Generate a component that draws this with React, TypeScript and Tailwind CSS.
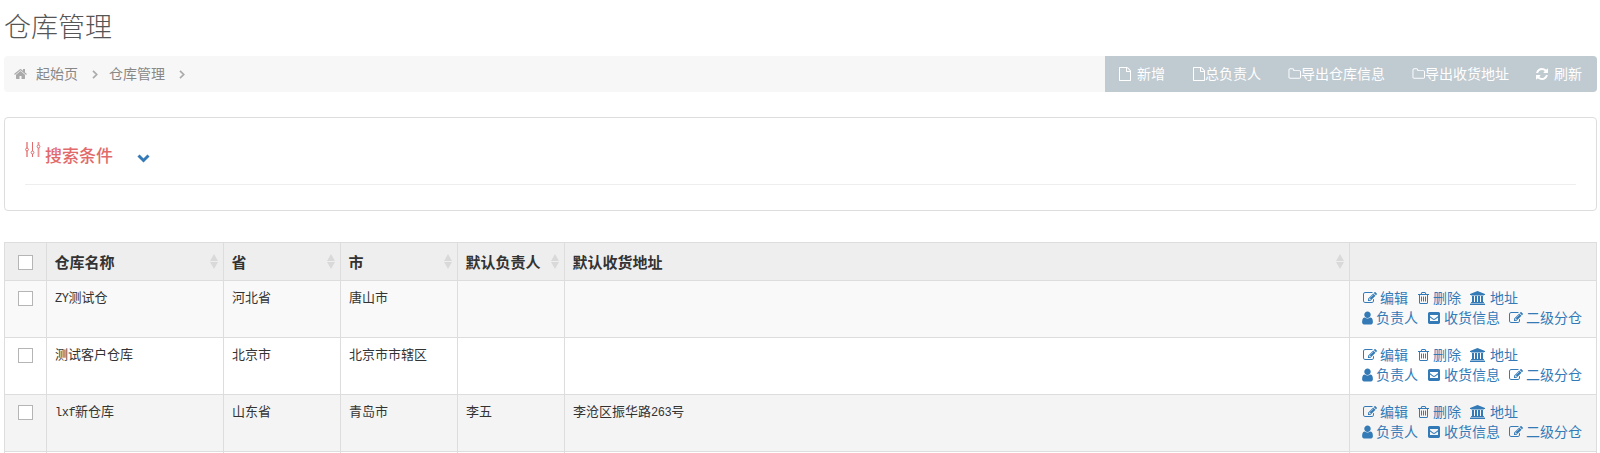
import React from "react";

type IconProps = { box: string; w: string; d: string; className?: string };

const Icon = ({ box, w, d, className = "" }: IconProps) => (
  <svg viewBox={box} className={`${w} h-3.5 shrink-0 ${className}`} fill="currentColor" aria-hidden="true">
    <path d={d} fillRule="evenodd" />
  </svg>
);

const FILE =
  "M1596 380q28 28 48 76t20 88v1152q0 40-28 68t-68 28h-1344q-40 0-68-28t-28-68v-1600q0-40 28-68t68-28h896q40 0 88 20t76 48zm-444-244v376h376q-10-29-22-41l-313-313q-12-12-41-22zm384 1528v-1024h-416q-40 0-68-28t-28-68v-416h-768v1536h1280z";
const FOLDER =
  "M1600 1312v-704q0-40-28-68t-68-28h-704q-40 0-68-28t-28-68v-64q0-40-28-68t-68-28h-320q-40 0-68 28t-28 68v960q0 40 28 68t68 28h1216q40 0 68-28t28-68zm128-704v704q0 92-66 158t-158 66h-1216q-92 0-158-66t-66-158v-960q0-92 66-158t158-66h320q92 0 158 66t66 158v32h672q92 0 158 66t66 158z";
const REFRESH =
  "M1639 1056q0 5-1 7-64 268-268 434.5t-478 166.5q-146 0-282.5-55t-243.5-157l-129 129q-19 19-45 19t-45-19-19-45v-448q0-26 19-45t45-19h448q26 0 45 19t19 45-19 45l-137 137q71 66 161 102t187 36q134 0 250-65t186-179q11-17 53-117 8-23 30-23h192q13 0 22.5 9.5t9.5 22.5zm25-800v448q0 26-19 45t-45 19h-448q-26 0-45-19t-19-45 19-45l138-138q-148-137-349-137-134 0-250 65t-186 179q-11 17-53 117-8 23-30 23h-199q-13 0-22.5-9.5t-9.5-22.5v-7q65-268 270-434.5t480-166.5q146 0 284 55.5t245 156.5l130-129q19-19 45-19t45 19 19 45z";
const HOME =
  "M1472 992v480q0 26-19 45t-45 19h-384v-384h-256v384h-384q-26 0-45-19t-19-45v-480q0-1 .5-3t.5-3l575-474 575 474q1 2 1 6zm223-69l-62 74q-8 9-21 11h-3q-13 0-21-7l-692-577-692 577q-12 8-24 7-13-2-21-11l-62-74q-8-10-7-23.5t11-21.5l719-599q32-26 76-26t76 26l244 204v-195q0-14 9-23t23-9h192q14 0 23 9t9 23v408l219 182q10 8 11 21.5t-7 23.5z";
const EDIT =
  "M888 1184l116-116-152-152-116 116v56h96v96h56zm440-720q-16-16-33 1l-350 350q-17 17-1 33t33-1l350-350q17-17 1-33zm80 594v190q0 119-84.5 203.5t-203.5 84.5h-832q-119 0-203.5-84.5t-84.5-203.5v-832q0-119 84.5-203.5t203.5-84.5h832q63 0 117 25 15 7 18 23 3 17-9 29l-49 49q-14 14-32 8-23-6-45-6h-832q-66 0-113 47t-47 113v832q0 66 47 113t113 47h832q66 0 113-47t47-113v-126q0-13 9-22l64-64q15-15 35-7t20 29zm-96-738l288 288-672 672h-288v-288zm444 132l-92 92-288-288 92-92q28-28 68-28t68 28l152 152q28 28 28 68t-28 68z";
const TRASH =
  "M704 736v576q0 14-9 23t-23 9h-64q-14 0-23-9t-9-23v-576q0-14 9-23t23-9h64q14 0 23 9t9 23zm256 0v576q0 14-9 23t-23 9h-64q-14 0-23-9t-9-23v-576q0-14 9-23t23-9h64q14 0 23 9t9 23zm256 0v576q0 14-9 23t-23 9h-64q-14 0-23-9t-9-23v-576q0-14 9-23t23-9h64q14 0 23 9t9 23zm128 724v-948h-896v948q0 22 7 40.5t14.5 27 10.5 8.5h832q3 0 10.5-8.5t14.5-27 7-40.5zm-672-1076h448l-48-117q-7-9-17-11h-317q-10 2-17 11zm928 32v64q0 14-9 23t-23 9h-96v948q0 83-47 143.5t-113 60.5h-832q-66 0-113-58.5t-47-141.5v-952h-96q-14 0-23-9t-9-23v-64q0-14 9-23t23-9h309l70-167q15-37 54-63t79-26h320q40 0 79 26t54 63l70 167h309q14 0 23 9t9 23z";
const BANK =
  "M960 0l960 384v128h-128q0 26-20.5 45t-48.5 19h-1526q-28 0-48.5-19t-20.5-45h-128v-128zm-704 640h256v768h128v-768h256v768h128v-768h256v768h128v-768h256v768h59q28 0 48.5 19t20.5 45v64h-1664v-64q0-26 20.5-45t48.5-19h59v-768zm1595 960q28 0 48.5 19t20.5 45v128h-1920v-128q0-26 20.5-45t48.5-19h1782z";
const USER =
  "M1536 1399q0 109-62.5 187t-150.5 78h-854q-88 0-150.5-78t-62.5-187q0-85 8.5-160.5t31.5-152 58.5-131 94-89 134.5-34.5q131 128 313 128t313-128q76 0 134.5 34.5t94 89 58.5 131 31.5 152 8.5 160.5zm-256-887q0 159-112.5 271.5t-271.5 112.5-271.5-112.5-112.5-271.5 112.5-271.5 271.5-112.5 271.5 112.5 112.5 271.5z";
const ENVELOPE =
  "M320 128h1152q80 0 136 56t56 136v1152q0 80-56 136t-136 56h-1152q-80 0-136-56t-56-136v-1152q0-80 56-136t136-56zM384 512v100q0 60 60 104l370 260q82 54 164 0l370-260q60-44 60-104v-100zM384 830v450h1024v-450l-352 262q-160 100-320 0z";

const Slim = ({ d }: { d: string }) => <Icon box="128 0 1536 1792" w="w-3" d={d} />;

const Angle = ({ className = "" }) => (
  <svg viewBox="0 0 6 9" className={`h-[9px] w-1.5 ${className}`} fill="none" stroke="#aaa" strokeWidth="1.7" aria-hidden="true">
    <path d="M1 .8l3.7 3.7L1 8.2" />
  </svg>
);

const Sort = () => (
  <svg viewBox="0 0 8 15" className="h-[15px] w-2 shrink-0" fill="#d9d9d9" aria-hidden="true">
    <path d="M4 0l4 7H0zM0 8h8l-4 7z" />
  </svg>
);

const Check = () => <span className="block size-[15px] border border-[#b5b5b5] bg-white" />;

const columns = ["仓库名称", "省", "市", "默认负责人", "默认收货地址"];

const rows = [
  { bg: "bg-[#f9f9f9]", cells: ["ZY测试仓", "河北省", "唐山市", "", ""] },
  { bg: "bg-white", cells: ["测试客户仓库", "北京市", "北京市市辖区", "", ""] },
  { bg: "bg-[#f4f4f4]", cells: ["lxf新仓库", "山东省", "青岛市", "李五", "李沧区振华路263号"] },
];

const grid = "grid grid-cols-[42px_177px_117px_117px_107px_785px_247px]";
const line = "border-r border-b border-[#ddd]";

const CellText = ({ text }: { text: string }) => (
  <>
    {text.split(/([A-Za-z0-9]+)/).map((part, i) =>
      /^[A-Za-z0-9]+$/.test(part) ? (
        <span key={i} className="font-['Liberation_Mono',monospace] text-[12px] tracking-[-0.5px]">{part}</span>
      ) : (
        part
      )
    )}
  </>
);

const Action = ({ icon, label, gap }: { icon: React.ReactNode; label: string; gap: string }) => (
  <a className={`flex items-center ${gap}`}>
    {icon}
    <span className="-mt-0.5">{label}</span>
  </a>
);

const Actions = () => (
  <div className="pt-[7px] pl-3 text-sm leading-5 font-normal text-[#337ab7]">
    <div className="flex h-5 items-center pl-px">
      <Action gap="gap-[3px]" icon={<Icon box="0 0 1792 1792" w="w-3.5" d={EDIT} />} label="编辑" />
      <span className="w-[10px]" />
      <Action gap="gap-1" icon={<Icon box="192 0 1408 1792" w="w-[11px]" d={TRASH} />} label="删除" />
      <span className="w-[9px]" />
      <Action gap="gap-[5px]" icon={<Icon box="0 0 1920 1792" w="w-[15px]" d={BANK} />} label="地址" />
    </div>
    <div className="flex h-5 items-center">
      <Action gap="gap-[3px]" icon={<Icon box="256 64 1280 1664" w="w-[11px]" d={USER} />} label="负责人" />
      <span className="w-[10px]" />
      <Action gap="gap-1" icon={<Slim d={ENVELOPE} />} label="收货信息" />
      <span className="w-[9px]" />
      <Action gap="gap-[3px]" icon={<Icon box="0 0 1792 1792" w="w-3.5" d={EDIT} />} label="二级分仓" />
    </div>
  </div>
);

export default function App() {
  return (
    <div className="h-[453px] w-[1600px] overflow-hidden bg-white pr-[3px] pl-1 font-['Noto_Sans_CJK_SC',sans-serif] text-[#333]">
      <h1 className="h-14 pt-[6px] text-[27px] leading-10 font-light text-[#555]">仓库管理</h1>

      <div className="flex h-9 justify-between overflow-hidden rounded bg-[#f7f7f7]">
        <nav className="flex items-center pl-[9px] text-sm font-normal text-[#888]">
          <Icon box="0 0 1664 1792" w="w-[14px]" d={HOME} className="text-[#aaa]" />
          <span className="-mt-0.5 ml-[9px]">起始页</span>
          <Angle className="ml-3.5" />
          <span className="-mt-0.5 ml-[11px]">仓库管理</span>
          <Angle className="ml-3.5" />
        </nav>
        <div className="flex w-[492px] items-center bg-[#bfcad1] pl-3.5 text-sm font-normal text-white">
          <Action gap="gap-1.5" icon={<Slim d={FILE} />} label="新增" />
          <span className="w-7" />
          <Action gap="gap-0" icon={<Slim d={FILE} />} label="总负责人" />
          <span className="w-[27px]" />
          <Action gap="gap-0" icon={<Icon box="0 0 1728 1792" w="w-[13px]" d={FOLDER} />} label="导出仓库信息" />
          <span className="w-[27px]" />
          <Action gap="gap-0" icon={<Icon box="0 0 1728 1792" w="w-[13px]" d={FOLDER} />} label="导出收货地址" />
          <span className="w-[27px]" />
          <Action gap="gap-1.5" icon={<Slim d={REFRESH} />} label="刷新" />
        </div>
      </div>

      <section className="mt-[25px] h-[94px] rounded border border-[#ddd] px-5">
        <div className="flex h-[67px] border-b border-[#eee] pt-6">
          <svg viewBox="0 0 16 16" className="size-4 text-[#e26a6a]" fill="none" stroke="currentColor" aria-hidden="true">
            <path d="M2 0v6M2 9v6M13.5 0v3M13.5 6v9" strokeWidth="1.8" opacity=".7" />
            <path d="M7.5 0v9M7.5 12v3" strokeWidth="1" />
            <circle cx="2" cy="7.5" r="1.4" />
            <circle cx="7.5" cy="10.5" r="1.4" />
            <circle cx="13.5" cy="4.5" r="1.4" />
          </svg>
          <span className="ml-1 h-6 pt-px text-[17px] leading-6 font-medium text-[#e26a6a]">搜索条件</span>
          <svg viewBox="0 0 13 9" className="mt-3 ml-6 h-[9px] w-[13px]" fill="none" stroke="#337ab7" strokeWidth="3" aria-hidden="true">
            <path d="M1.5 1.5l5 5 5-5" />
          </svg>
        </div>
      </section>

      <div className="mt-[31px] w-[1593px] border-t border-l border-[#ddd]">
        <div className={`${grid} h-[38px] bg-[#eee] text-[15px] font-bold`}>
          <div className={`${line} pt-3 pl-[13px]`}>
            <Check />
          </div>
          {columns.map((name) => (
            <div key={name} className={`${line} flex items-center justify-between pr-[5px] pl-[7.5px]`}>
              <span className="pt-px">{name}</span>
              <Sort />
            </div>
          ))}
          <div className={line} />
        </div>
        {rows.map((row) => (
          <div key={row.cells[0]} className={`${grid} h-[57px] ${row.bg}`}>
            <div className={`${line} pt-2.5 pl-[13px]`}>
              <Check />
            </div>
            {row.cells.map((text, i) => (
              <div key={i} className={`${line} pt-[7px] pl-2 text-[13px] leading-[18px]`}>
                <CellText text={text} />
              </div>
            ))}
            <div className={line}>
              <Actions />
            </div>
          </div>
        ))}
        <div className={`${grid} h-px`}>
          {[0, 1, 2, 3, 4, 5, 6].map((i) => (
            <div key={i} className="border-r border-[#ddd]" />
          ))}
        </div>
      </div>
    </div>
  );
}
